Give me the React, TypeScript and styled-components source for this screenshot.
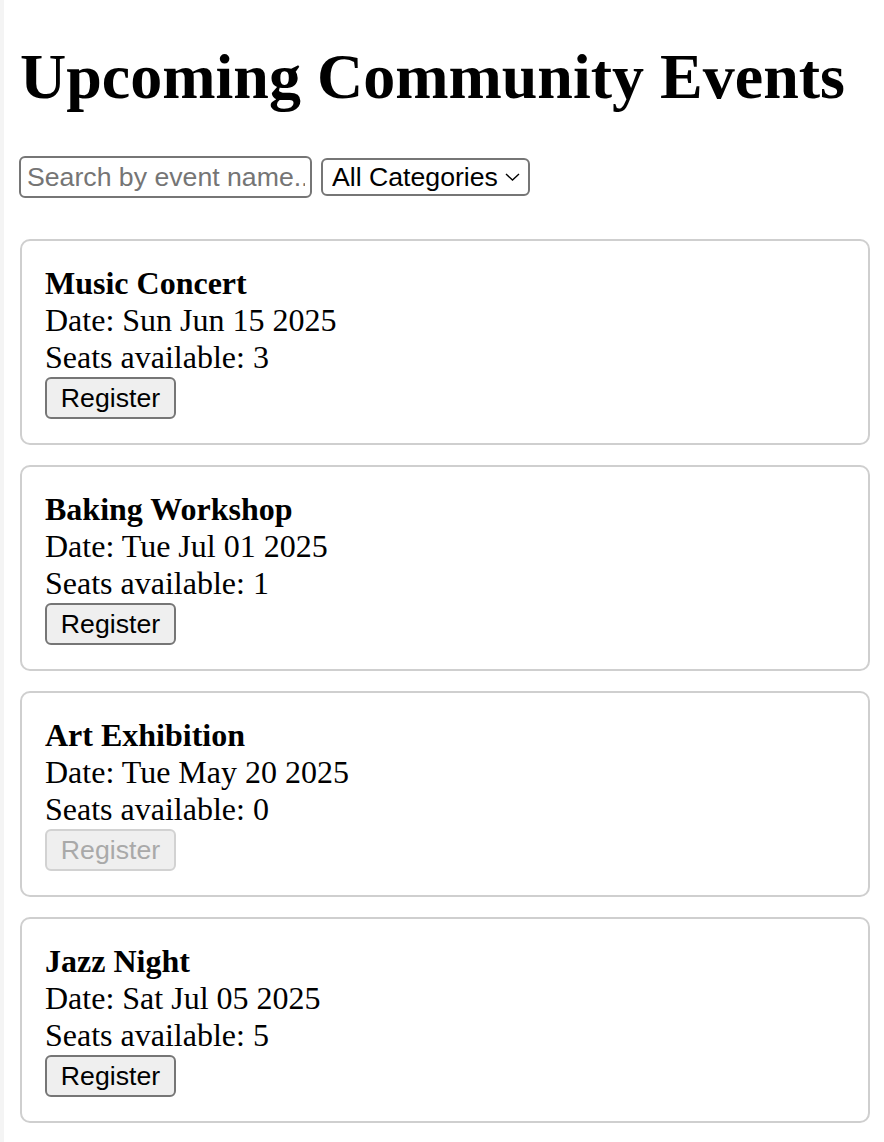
import styled, { createGlobalStyle } from 'styled-components';
import { useState } from 'react';

type EventItem = {
  id: number;
  name: string;
  date: Date;
  seats: number;
  category: string;
};

const events: EventItem[] = [
  { id: 1, name: 'Music Concert', date: new Date(2025, 5, 15), seats: 3, category: 'music' },
  { id: 2, name: 'Baking Workshop', date: new Date(2025, 6, 1), seats: 1, category: 'workshop' },
  { id: 3, name: 'Art Exhibition', date: new Date(2025, 4, 20), seats: 0, category: 'art' },
  { id: 4, name: 'Jazz Night', date: new Date(2025, 6, 5), seats: 5, category: 'music' },
];

const GlobalStyle = createGlobalStyle`
  html, body {
    margin: 0;
    padding: 0;
    background: #fff;
  }

  body {
    font-family: "Liberation Serif", "Times New Roman", serif;
    font-size: 32px;
    color: #000;
  }
`;

const App = () => {
  const [search, setSearch] = useState('');
  const [category, setCategory] = useState('all');

  const visible = events.filter(
    (e) =>
      e.name.toLowerCase().includes(search.toLowerCase()) &&
      (category === 'all' || e.category === category)
  );

  return (
    <>
      <GlobalStyle />
      <Page>
        <Title>Upcoming Community Events</Title>
        <Toolbar>
          <SearchInput
            type="text"
            placeholder="Search by event name..."
            value={search}
            onChange={(e) => setSearch(e.target.value)}
          />
          <SelectWrap>
            <CategorySelect value={category} onChange={(e) => setCategory(e.target.value)}>
              <option value="all">All Categories</option>
              <option value="music">Music</option>
              <option value="workshop">Workshop</option>
              <option value="art">Art</option>
            </CategorySelect>
            <Chevron width="15" height="8" viewBox="0 0 15 8">
              <path d="M1 1 L7.5 7 L14 1" fill="none" stroke="#000" strokeWidth="1.4" />
            </Chevron>
          </SelectWrap>
        </Toolbar>

        <EventList>
          {visible.map((event) => (
            <Card key={event.id}>
              <EventName>{event.name}</EventName>
              <Line>Date: {event.date.toDateString()}</Line>
              <Line>Seats available: {event.seats}</Line>
              <RegisterButton type="button" disabled={event.seats === 0}>
                Register
              </RegisterButton>
            </Card>
          ))}
        </EventList>
      </Page>
    </>
  );
};

export default App;

const Page = styled.div`
  min-height: 1142px;
  box-sizing: border-box;
  border-left: 4px solid #f4f4f4;
  padding: 40px 14px 0 16px;
`;

const Title = styled.h1`
  margin: 0;
  font-size: 64px;
  line-height: 74px;
  font-weight: bold;
`;

const Toolbar = styled.div`
  display: flex;
  align-items: center;
  gap: 9px;
  margin-top: 42px;
  height: 42px;
`;

const controlFont = `
  font-family: "Liberation Sans", Arial, sans-serif;
  font-size: 26.67px;
  color: #000;
`;

const SearchInput = styled.input`
  ${controlFont}
  box-sizing: border-box;
  width: 293px;
  height: 42px;
  margin: 0 0 0 -1px;
  padding: 0 5px 0 6px;
  border: 2px solid #767676;
  border-radius: 6px;
  background: #fff;
  outline: none;

  &::placeholder {
    color: #757575;
  }
`;

const SelectWrap = styled.div`
  position: relative;
  display: flex;
`;

const CategorySelect = styled.select`
  ${controlFont}
  appearance: none;
  box-sizing: border-box;
  width: 209px;
  height: 38px;
  margin: 0;
  padding: 0 0 0 9px;
  border: 2px solid #767676;
  border-radius: 6px;
  background: #fff;
  outline: none;
`;

const Chevron = styled.svg`
  position: absolute;
  left: 184px;
  top: 15px;
  pointer-events: none;
`;

const EventList = styled.div`
  display: flex;
  flex-direction: column;
  gap: 20px;
  margin-top: 41px;
`;

const Card = styled.div`
  box-sizing: border-box;
  height: 206px;
  padding: 24px 23px;
  border: 2px solid #cfcfcf;
  border-radius: 10px;
`;

const EventName = styled.div`
  font-weight: bold;
  line-height: 37px;
`;

const Line = styled.div`
  line-height: 37px;
`;

const RegisterButton = styled.button`
  ${controlFont}
  display: block;
  box-sizing: border-box;
  height: 42px;
  width: 131px;
  margin: 1px 0 0;
  padding: 0 12px;
  border: 2px solid #767676;
  border-radius: 6px;
  background: #efefef;
  cursor: pointer;

  &:disabled {
    color: #a9a9a9;
    border-color: #d2d2d2;
    background: #efefef;
    cursor: default;
  }
`;
